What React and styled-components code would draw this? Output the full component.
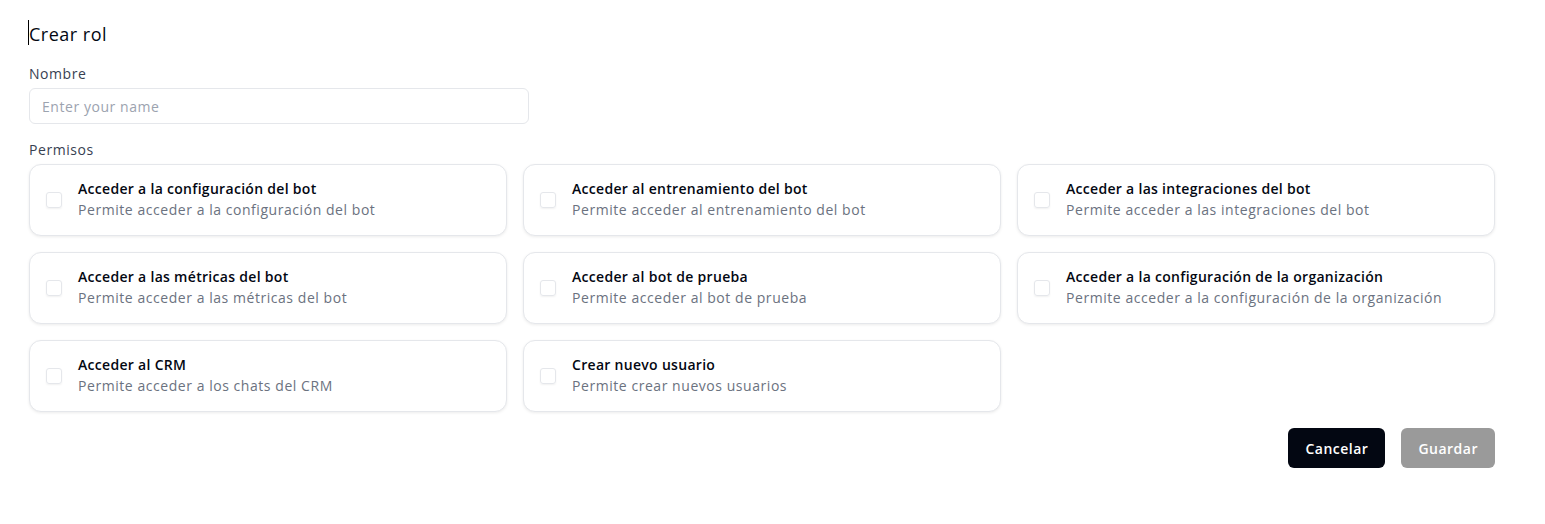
import React from 'react';
import styled, { createGlobalStyle } from 'styled-components';

const GlobalStyle = createGlobalStyle`
	* { box-sizing: border-box; }
	body {
		margin: 0;
		background: #ffffff;
		font-family: "Open Sans", "Noto Sans", sans-serif;
		letter-spacing: 0.55px;
		color: #030712;
	}
`;

const permisos = [
	{ title: 'Acceder a la configuración del bot', desc: 'Permite acceder a la configuración del bot' },
	{ title: 'Acceder al entrenamiento del bot', desc: 'Permite acceder al entrenamiento del bot' },
	{ title: 'Acceder a las integraciones del bot', desc: 'Permite acceder a las integraciones del bot' },
	{ title: 'Acceder a las métricas del bot', desc: 'Permite acceder a las métricas del bot' },
	{ title: 'Acceder al bot de prueba', desc: 'Permite acceder al bot de prueba' },
	{ title: 'Acceder a la configuración de la organización', desc: 'Permite acceder a la configuración de la organización' },
	{ title: 'Acceder al CRM', desc: 'Permite acceder a los chats del CRM' },
	{ title: 'Crear nuevo usuario', desc: 'Permite crear nuevos usuarios' },
];

export default function App() {
	return (
		<>
			<GlobalStyle />
			<Page>
				<Title>Crear rol</Title>
				<Field>
					<Label>Nombre</Label>
					<Input placeholder="Enter your name" />
				</Field>
				<Field $last>
					<Label>Permisos</Label>
					<Grid>
						{permisos.map((p) => (
							<Card key={p.title}>
								<Check type="checkbox" />
								<CardText>
									<CardTitle>{p.title}</CardTitle>
									<CardDesc>{p.desc}</CardDesc>
								</CardText>
							</Card>
						))}
					</Grid>
				</Field>
				<Actions>
					<Button>Cancelar</Button>
					<Button disabled $muted>Guardar</Button>
				</Actions>
			</Page>
		</>
	);
}

const Page = styled.div`
	width: 1466px;
	margin-left: 29px;
	padding-top: 22px;
`;

const Title = styled.h1`
	margin: 0 0 18px;
	font-size: 18px;
	font-weight: 500;
	line-height: 24px;
	letter-spacing: 0.5px;
	position: relative;
	&::before {
		content: '';
		position: absolute;
		left: -1px;
		top: -2px;
		width: 1px;
		height: 25px;
		background: #000;
	}
`;

const Field = styled.div`
	display: flex;
	flex-direction: column;
	gap: 4px;
	margin-bottom: ${(p) => (p.$last ? '0' : '16px')};
`;

const Label = styled.label`
	font-size: 14px;
	line-height: 20px;
	color: #374151;
`;

const Input = styled.input`
	width: 500px;
	height: 36px;
	padding: 0 12px;
	border: 1px solid #e5e7eb;
	border-radius: 6px;
	font-family: inherit;
	font-size: 14px;
	letter-spacing: 0.55px;
	outline: none;
	&::placeholder { color: #9ca3af; }
`;

const Grid = styled.div`
	display: grid;
	grid-template-columns: repeat(3, 1fr);
	gap: 16px;
`;

const Card = styled.div`
	display: flex;
	align-items: center;
	gap: 16px;
	height: 72px;
	padding: 0 16px 2px;
	border: 1px solid #e5e7eb;
	border-radius: 12px;
	box-shadow: 0 1px 3px rgba(0, 0, 0, 0.08);
	background: #fff;
`;

const Check = styled.input`
	appearance: none;
	margin: 2px 0 0;
	width: 16px;
	height: 16px;
	border: 1px solid #e5e7eb;
	border-radius: 3px;
	box-shadow: 0 1px 2px rgba(0, 0, 0, 0.06);
	flex-shrink: 0;
`;

const CardText = styled.div`
	display: flex;
	flex-direction: column;
	gap: 1px;
`;

const CardTitle = styled.span`
	font-size: 14px;
	font-weight: 600;
	line-height: 20px;
	letter-spacing: 0.3px;
	color: #030712;
`;

const CardDesc = styled.span`
	font-size: 14px;
	line-height: 20px;
	color: #6b7280;
`;

const Actions = styled.div`
	display: flex;
	justify-content: flex-end;
	gap: 16px;
	margin-top: 16px;
`;

const Button = styled.button`
	height: 40px;
	padding: 0 17px;
	border: none;
	border-radius: 6px;
	font-family: inherit;
	font-size: 14px;
	font-weight: 600;
	letter-spacing: 0.5px;
	color: #fff;
	background: ${(p) => (p.$muted ? '#9a9a9a' : '#030712')};
	cursor: pointer;
`;
